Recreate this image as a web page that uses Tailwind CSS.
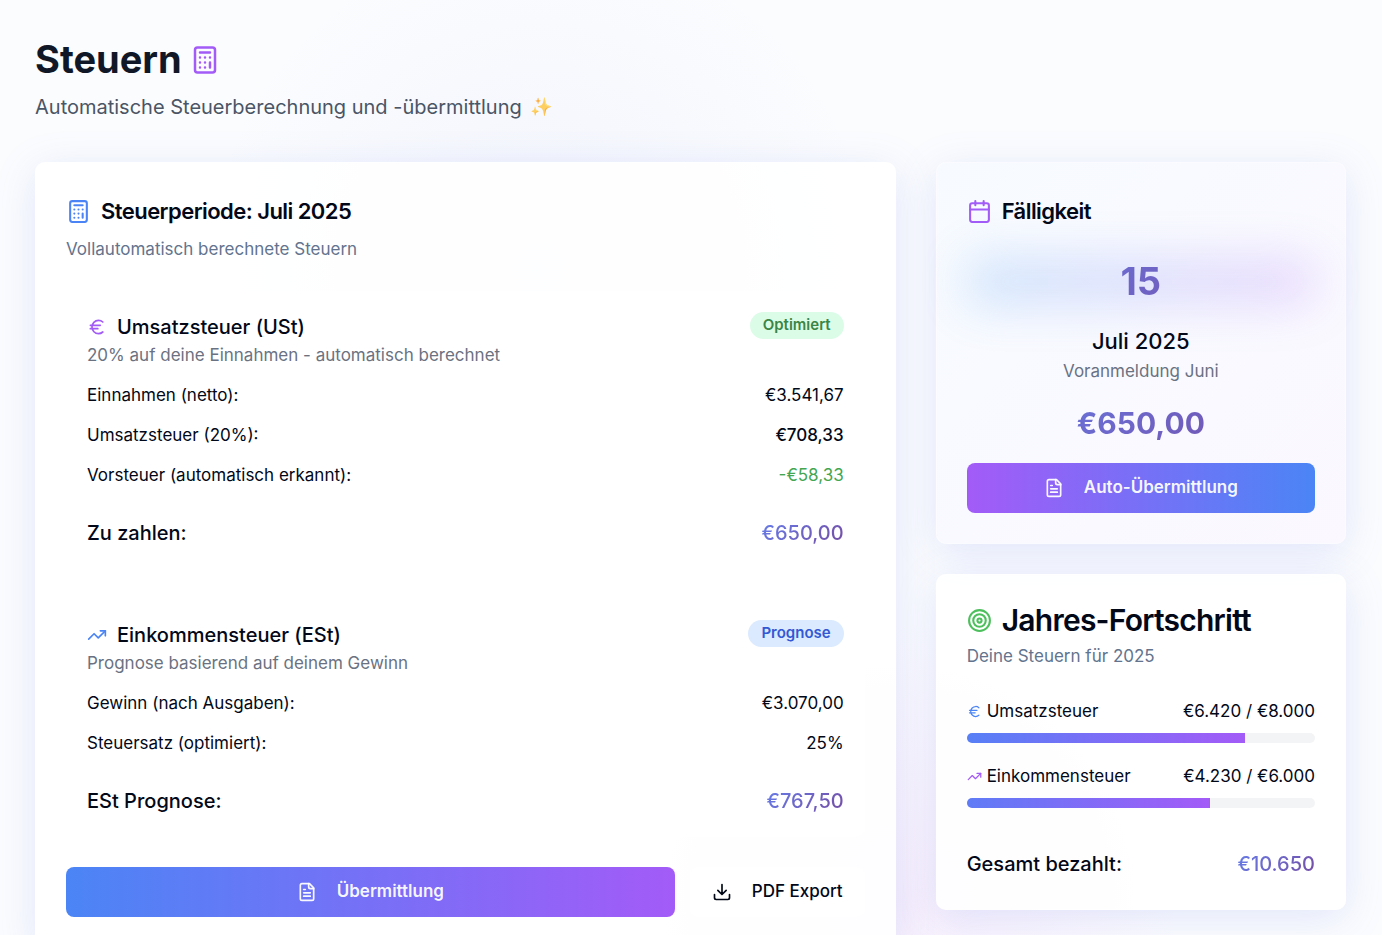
<!DOCTYPE html>
<html lang="de">
<head>
  <meta charset="UTF-8" />
  <meta name="viewport" content="width=device-width, initial-scale=1">
  <title>Steuern</title>
  <script src="https://cdn.jsdelivr.net/npm/@tailwindcss/browser@4"></script>
</head>
<body class="min-h-screen overflow-x-hidden bg-[#fbfcfe] font-['Inter',sans-serif] text-[#020817]">
  <!-- Icons -->
  <svg class="hidden" aria-hidden="true">
    <symbol id="icon-calculator" viewBox="0 0 24 24">
      <rect width="16" height="20" x="4" y="2" rx="2" />
      <path d="M8 6h8M16 14v4M16 10h.01M12 10h.01M8 10h.01M12 14h.01M8 14h.01M12 18h.01M8 18h.01" />
    </symbol>
    <symbol id="icon-euro" viewBox="0 0 24 24">
      <path d="M4 10h12M4 14h9M19 6a7.7 7.7 0 0 0-5.2-2A7.9 7.9 0 0 0 6 12c0 4.4 3.5 8 7.8 8 2 0 3.8-.8 5.2-2" />
    </symbol>
    <symbol id="icon-trending" viewBox="0 0 24 24">
      <path d="m22 7-8.5 8.5-5-5L2 17" />
      <path d="M16 7h6v6" />
    </symbol>
    <symbol id="icon-calendar" viewBox="0 0 24 24">
      <path d="M8 2v4M16 2v4M3 10h18" />
      <rect width="18" height="18" x="3" y="4" rx="2" />
    </symbol>
    <symbol id="icon-target" viewBox="0 0 24 24">
      <circle cx="12" cy="12" r="10" />
      <circle cx="12" cy="12" r="6" />
      <circle cx="12" cy="12" r="2" />
    </symbol>
    <symbol id="icon-file" viewBox="0 0 24 24">
      <path d="M15 2H6a2 2 0 0 0-2 2v16a2 2 0 0 0 2 2h12a2 2 0 0 0 2-2V7Z" />
      <path d="M14 2v4a2 2 0 0 0 2 2h4M10 9H8M16 13H8M16 17H8" />
    </symbol>
    <symbol id="icon-download" viewBox="0 0 24 24">
      <path d="M21 15v4a2 2 0 0 1-2 2H5a2 2 0 0 1-2-2v-4M7 10l5 5 5-5M12 15V3" />
    </symbol>
  </svg>

  <div class="min-h-screen bg-[radial-gradient(circle_at_540px_270px,rgba(102,126,234,0.06),transparent_340px),radial-gradient(circle_at_900px_900px,rgba(220,130,240,0.10),transparent_280px)] pt-[37px] pr-9 pb-10 pl-[35px]">
    <!-- Header Section -->
    <header class="mb-10">
      <h1 class="flex items-center gap-2 text-[38px] leading-[45px] font-bold text-gray-900">
        Steuern
        <svg class="size-[30px] fill-none stroke-[#a35bf7] stroke-2 [stroke-linecap:round] [stroke-linejoin:round]"><use href="#icon-calculator" /></svg>
      </h1>
      <p class="mt-[10px] flex items-center gap-2 text-[20px] leading-[30px] text-gray-600">
        Automatische Steuerberechnung und -übermittlung
        <span class="text-[18px] opacity-85 hue-rotate-[-18deg]">✨</span>
      </p>
    </header>

    <main class="grid grid-cols-3 items-start gap-10">
      <!-- Steuerperiode -->
      <section class="col-span-2 rounded-[10px] border border-white/40 bg-white/85 p-[30px] shadow-[0_8px_40px_rgba(102,126,234,0.17)]">
        <h2 class="flex items-center gap-[10px] text-[22px] leading-[37px] font-semibold tracking-tight">
          <svg class="size-[25px] fill-none stroke-[#4b85f5] stroke-2 [stroke-linecap:round] [stroke-linejoin:round]"><use href="#icon-calculator" /></svg>
          Steuerperiode: Juli 2025
        </h2>
        <p class="mt-[7px] text-[17px] leading-[25px] text-slate-500">Vollautomatisch berechnete Steuern</p>

        <!-- Umsatzsteuer -->
        <div class="mt-[29px] rounded-[10px] border border-white/40 bg-white/70 p-5">
          <div class="flex items-start justify-between">
            <div>
              <h3 class="flex items-center gap-[10px] text-[20px] leading-[30px] font-medium">
                <svg class="size-5 fill-none stroke-[#a35bf7] stroke-2 [stroke-linecap:round] [stroke-linejoin:round]"><use href="#icon-euro" /></svg>
                Umsatzsteuer (USt)
              </h3>
              <p class="text-[17px] leading-[27px] text-gray-500">20% auf deine Einnahmen - automatisch berechnet</p>
            </div>
            <span class="rounded-full bg-green-100 px-[13px] pt-[2px] pb-[4px] text-[15px] leading-[21px] font-semibold text-[#3b8545]">Optimiert</span>
          </div>
          <dl class="mt-[14px] space-y-[15px] text-[17px] leading-[25px]">
            <div class="flex justify-between"><dt>Einnahmen (netto):</dt><dd>€3.541,67</dd></div>
            <div class="flex justify-between"><dt>Umsatzsteuer (20%):</dt><dd class="font-medium">€708,33</dd></div>
            <div class="flex justify-between"><dt>Vorsteuer (automatisch erkannt):</dt><dd class="text-[#43a650]">-€58,33</dd></div>
            <div class="flex justify-between border-t border-white/20 pt-[14px] text-[20px] leading-[30px] font-medium">
              <dt>Zu zahlen:</dt>
              <dd class="bg-[linear-gradient(135deg,#667eea,#764ba2)] bg-clip-text text-transparent">€650,00</dd>
            </div>
          </dl>
        </div>

        <!-- Einkommensteuer -->
        <div class="mt-[30px] rounded-[10px] border border-white/40 bg-white/70 p-5">
          <div class="flex items-start justify-between">
            <div>
              <h3 class="flex items-center gap-[10px] text-[20px] leading-[30px] font-medium">
                <svg class="size-5 fill-none stroke-[#4b85f5] stroke-2 [stroke-linecap:round] [stroke-linejoin:round]"><use href="#icon-trending" /></svg>
                Einkommensteuer (ESt)
              </h3>
              <p class="text-[17px] leading-[27px] text-gray-500">Prognose basierend auf deinem Gewinn</p>
            </div>
            <span class="rounded-full bg-blue-100 px-[13px] pt-[2px] pb-[4px] text-[15px] leading-[21px] font-semibold text-[#3358d4]">Prognose</span>
          </div>
          <dl class="mt-[14px] space-y-[15px] text-[17px] leading-[25px]">
            <div class="flex justify-between"><dt>Gewinn (nach Ausgaben):</dt><dd>€3.070,00</dd></div>
            <div class="flex justify-between"><dt>Steuersatz (optimiert):</dt><dd>25%</dd></div>
            <div class="flex justify-between border-t border-white/20 pt-[14px] text-[20px] leading-[30px] font-medium">
              <dt>ESt Prognose:</dt>
              <dd class="bg-[linear-gradient(135deg,#667eea,#764ba2)] bg-clip-text text-transparent">€767,50</dd>
            </div>
          </dl>
        </div>

        <!-- Aktionen -->
        <div class="mt-[30px] flex gap-[15px] text-[17px]">
          <button type="button" class="flex h-[50px] flex-1 items-center justify-center gap-5 rounded-lg bg-[linear-gradient(to_right,#4b85f5,#a35bf7)] font-semibold text-white/95">
            <svg class="size-5 fill-none stroke-current stroke-2 [stroke-linecap:round] [stroke-linejoin:round]"><use href="#icon-file" /></svg>
            Übermittlung
          </button>
          <button type="button" class="flex h-[50px] items-center gap-5 rounded-lg border border-white/40 bg-white/80 px-[21px] font-medium">
            <svg class="size-5 fill-none stroke-current stroke-2 [stroke-linecap:round] [stroke-linejoin:round]"><use href="#icon-download" /></svg>
            PDF Export
          </button>
        </div>
      </section>

      <aside class="space-y-[30px]">
        <!-- Fälligkeit -->
        <section class="rounded-[10px] border border-white/40 bg-[linear-gradient(135deg,#f7fbff,#fbf8ff)] p-[30px] shadow-[0_8px_40px_rgba(102,126,234,0.17)]">
          <h2 class="flex items-center gap-[10px] text-[22px] leading-[37px] font-semibold tracking-tight">
            <svg class="size-[25px] fill-none stroke-[#a35bf7] stroke-2 [stroke-linecap:round] [stroke-linejoin:round]"><use href="#icon-calendar" /></svg>
            Fälligkeit
          </h2>
          <div class="mt-[29px] text-center">
            <div class="relative">
              <div class="absolute inset-0 rounded-lg bg-[linear-gradient(to_right,#4b9cf0,#b070f5)] opacity-25 blur-xl"></div>
              <p class="relative bg-[linear-gradient(135deg,#667eea,#764ba2)] bg-clip-text text-[38px] leading-[45px] font-bold text-transparent">15</p>
            </div>
            <p class="mt-5 text-[22px] leading-[35px] font-medium">Juli 2025</p>
            <p class="text-[17px] leading-[25px] text-gray-500">Voranmeldung Juni</p>
            <p class="mt-[19px] bg-[linear-gradient(135deg,#667eea,#764ba2)] bg-clip-text text-[30px] leading-[40px] font-bold text-transparent">€650,00</p>
            <button type="button" class="mt-5 flex h-[50px] w-full items-center justify-center gap-5 rounded-lg bg-[linear-gradient(to_right,#a35bf7,#4b85f5)] text-[17px] font-semibold text-white/95">
              <svg class="size-5 fill-none stroke-current stroke-2 [stroke-linecap:round] [stroke-linejoin:round]"><use href="#icon-file" /></svg>
              Auto-Übermittlung
            </button>
          </div>
        </section>

        <!-- Jahres-Fortschritt -->
        <section class="rounded-[10px] border border-white/40 bg-white/85 p-[30px] shadow-[0_8px_40px_rgba(102,126,234,0.17)]">
          <h2 class="flex items-center gap-[10px] text-[30px] leading-[30px] font-semibold tracking-tight">
            <svg class="size-[25px] fill-none stroke-[#4dbf5c] stroke-2 [stroke-linecap:round] [stroke-linejoin:round]"><use href="#icon-target" /></svg>
            Jahres-Fortschritt
          </h2>
          <p class="mt-[9px] text-[17px] leading-[25px] text-slate-500">Deine Steuern für 2025</p>
          <div class="mt-[29px] space-y-5 text-[17px] leading-[27px]">
            <div>
              <div class="flex justify-between">
                <span class="flex items-center gap-[5px]">
                  <svg class="size-[15px] fill-none stroke-[#4b85f5] stroke-2 [stroke-linecap:round] [stroke-linejoin:round]"><use href="#icon-euro" /></svg>
                  Umsatzsteuer
                </span>
                <span>€6.420 / €8.000</span>
              </div>
              <div role="progressbar" aria-label="Umsatzsteuer" aria-valuenow="80" class="mt-2 h-[10px] overflow-hidden rounded-full bg-gray-100">
                <div class="h-full bg-[linear-gradient(to_right,#577ff6,#a35bf7)]" style="width: 80%"></div>
              </div>
            </div>
            <div>
              <div class="flex justify-between">
                <span class="flex items-center gap-[5px]">
                  <svg class="size-[15px] fill-none stroke-[#a35bf7] stroke-2 [stroke-linecap:round] [stroke-linejoin:round]"><use href="#icon-trending" /></svg>
                  Einkommensteuer
                </span>
                <span>€4.230 / €6.000</span>
              </div>
              <div role="progressbar" aria-label="Einkommensteuer" aria-valuenow="70" class="mt-2 h-[10px] overflow-hidden rounded-full bg-gray-100">
                <div class="h-full bg-[linear-gradient(to_right,#5f7bf6,#a35bf7)]" style="width: 70%"></div>
              </div>
            </div>
            <div class="flex justify-between border-t border-white/20 pt-5 text-[20px] leading-[30px] font-medium">
              <span>Gesamt bezahlt:</span>
              <span class="bg-[linear-gradient(135deg,#667eea,#764ba2)] bg-clip-text text-transparent">€10.650</span>
            </div>
          </div>
        </section>
      </aside>
    </main>
  </div>
</body>
</html>
